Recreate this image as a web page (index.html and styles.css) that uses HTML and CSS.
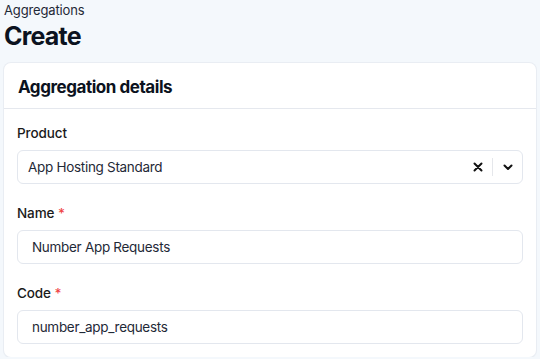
FILE: index.html
```html
<!DOCTYPE html>
<html>
<head>
<meta charset="utf-8">
<link rel="stylesheet" href="styles.css">
</head>
<body>
<div class="page">
  <div class="crumb">Aggregations</div>
  <h1 class="title">Create</h1>
  <div class="card">
    <div class="card-head">Aggregation details</div>
    <div class="card-body">
      <div class="field">
        <div class="label">Product</div>
        <div class="select">
          <span class="select-value">App Hosting Standard</span>
          <span class="select-actions">
            <svg class="icon-x" width="10" height="10" viewBox="0 0 10 10"><path d="M1.5 1.5 L8.5 8.5 M8.5 1.5 L1.5 8.5" stroke="#111" stroke-width="2" stroke-linecap="round"/></svg>
            <span class="sep"></span>
            <svg class="icon-chev" width="10" height="8" viewBox="0 0 10 8"><path d="M1.5 2.5 L5 6 L8.5 2.5" fill="none" stroke="#111" stroke-width="2" stroke-linecap="round" stroke-linejoin="round"/></svg>
          </span>
        </div>
      </div>
      <div class="field">
        <div class="label">Name <span class="req">*</span></div>
        <div class="input">Number App Requests</div>
      </div>
      <div class="field">
        <div class="label">Code <span class="req">*</span></div>
        <div class="input">number_app_requests</div>
      </div>
    </div>
  </div>
</div>
</body>
</html>
```

FILE: styles.css
```css
html, body {
  margin: 0;
  padding: 0;
  background: #f4f8fc;
  font-family: Inter, "Noto Sans", sans-serif;
  color: #111827;
}
.page {
  padding: 0 4px;
}
.crumb {
  font-size: 13px;
  line-height: 18px;
  padding-top: 1px;
  color: #1f2937;
  letter-spacing: -0.15px;
}
.title {
  margin: 0;
  font-size: 25px;
  font-weight: 700;
  line-height: 34px;
  color: #0b1220;
  letter-spacing: -0.8px;
}
.card {
  margin-top: 10px;
  background: #fff;
  border-radius: 7px;
  box-shadow: 0 0 0 1px #e9edf3, 0 1px 2px rgba(0,0,0,0.06);
  width: 532px;
}
.card-head {
  height: 46px;
  box-sizing: border-box;
  padding: 13px 14px 0;
  font-size: 17px;
  font-weight: 700;
  line-height: 22px;
  letter-spacing: -0.45px;
  border-bottom: 1px solid #e5e8ee;
  color: #0b1220;
}
.card-body {
  padding: 14px 13px 13px;
  display: flex;
  flex-direction: column;
  gap: 19px;
}
.label {
  font-size: 13.5px;
  font-weight: 500;
  line-height: 20px;
  margin-bottom: 7px;
  color: #1a1a1a;
  letter-spacing: -0.1px;
}
.req {
  color: #ef4444;
}
.select, .input {
  height: 34px;
  box-sizing: border-box;
  border: 1px solid #e3e7ee;
  border-radius: 6px;
  display: flex;
  align-items: center;
  font-size: 13.5px;
  color: #1f2937;
  letter-spacing: -0.3px;
}
.select {
  padding-left: 10px;
  justify-content: space-between;
}
.input {
  padding-left: 14px;
}
.select-actions {
  display: flex;
  align-items: center;
  padding-right: 9px;
}
.icon-x {
  margin-right: 9px;
}
.sep {
  width: 1px;
  height: 18px;
  background: #e5e7eb;
  margin-right: 10px;
}
```
